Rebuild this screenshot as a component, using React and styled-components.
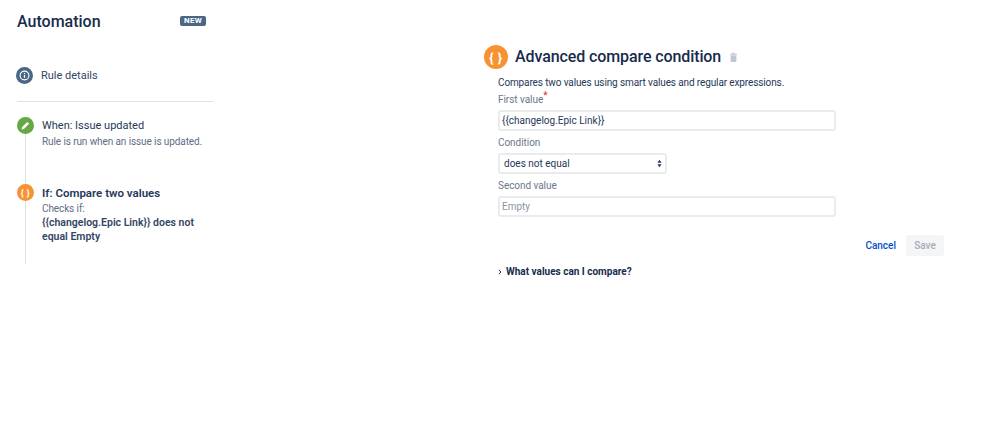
import styled, { createGlobalStyle } from 'styled-components'

const Global = createGlobalStyle`
  html, body { margin: 0; padding: 0; background: #fff; }
  body { font-family: Roboto, "Liberation Sans", sans-serif; color: #172b4d; }
`

const Page = styled.div`
  display: flex;
  width: 998px;
  height: 428px;
  overflow: hidden;
`

const Sidebar = styled.aside`
  width: 197px;
  margin-left: 16px;
  padding-top: 11px;
  flex-shrink: 0;
`

const Header = styled.div`
  display: flex;
  align-items: center;
  justify-content: space-between;
  height: 20px;
  padding-right: 7px;
`

const Title = styled.h1`
  margin: 0 0 0 1px;
  font-size: 16px;
  font-weight: 500;
  color: #172b4d;
`

const Badge = styled.span`
  background: #4a6785;
  color: #fff;
  border-radius: 2px;
  font-size: 8px;
  line-height: 10px;
  font-weight: 700;
  width: 26px;
  text-align: center;
  letter-spacing: 0.3px;
`

const DetailsRow = styled.div`
  display: flex;
  align-items: center;
  gap: 8px;
  margin-top: 34px;
  height: 20px;
`

const DetailsLabel = styled.span`
  font-size: 11px;
  color: #344563;
`

const Divider = styled.hr`
  border: 0;
  border-top: 1px solid #dfe1e6;
  margin: 16px 0 15px 1px;
`

const Step = styled.div`
  display: flex;
  gap: 8px;
  height: ${props => props.height}px;
  padding-left: 1px;
`

const Rail = styled.div`
  display: flex;
  flex-direction: column;
  align-items: center;
  width: 17px;
  flex-shrink: 0;
`

const Connector = styled.div`
  width: 1px;
  flex: 1;
  background: #dfe1e6;
`

const Round = styled.div`
  width: ${props => props.size}px;
  height: ${props => props.size}px;
  border-radius: 50%;
  background: ${props => props.color};
  color: #fff;
  display: flex;
  align-items: center;
  justify-content: center;
  flex-shrink: 0;
  font-size: ${props => props.font || 9}px;
  font-weight: 700;
  letter-spacing: 0.5px;
`

const StepBody = styled.div`
  padding-top: 1px;
`

const StepTitle = styled.div`
  font-size: ${props => (props.bold ? 11.5 : 11)}px;
  line-height: 16px;
  font-weight: ${props => (props.bold ? 600 : 400)};
  color: #253858;
`

const StepText = styled.div`
  font-size: 10px;
  letter-spacing: -0.1px;
  line-height: 14px;
  color: #5e6c84;
  margin-top: 1px;
  white-space: nowrap;
`

const Strong = styled.div`
  font-size: 10.5px;
  line-height: 14px;
  font-weight: 600;
  color: #344563;
  width: 165px;
`

const Main = styled.main`
  margin-left: 271px;
  padding-top: 45px;
  width: 460px;
`

const Heading = styled.div`
  display: flex;
  align-items: center;
  gap: 7px;
  height: 24px;
`

const HeadingText = styled.h2`
  margin: 0 0 2px;
  font-size: 16px;
  letter-spacing: -0.1px;
  font-weight: 500;
  color: #172b4d;
`

const TrashIcon = styled.svg`
  margin-left: 1px;
  width: 9px;
  height: 10px;
  fill: #c1c7d0;
`

const Form = styled.div`
  margin: 0 0 0 14px;
  padding-top: 7px;
`

const Intro = styled.p`
  margin: 0;
  font-size: 10px;
  letter-spacing: -0.12px;
  line-height: 14px;
  color: #253858;
`

const Label = styled.label`
  display: block;
  font-size: 10px;
  letter-spacing: -0.05px;
  line-height: 14px;
  color: #6b778c;
  margin-top: ${props => props.top || 5}px;
  margin-bottom: 3px;
`

const Req = styled.sup`
  color: #de350b;
  font-size: 10px;
  line-height: 0;
`

const Field = styled.div`
  box-sizing: border-box;
  height: 21px;
  width: ${props => props.width}px;
  border: 2px solid #e9ebee;
  border-radius: 3px;
  background: #fff;
  padding: 0 3px 0 ${props => props.pad || 2}px;
  display: flex;
  align-items: center;
  justify-content: space-between;
  font-size: 10px;
  color: ${props => (props.muted ? '#8993a4' : '#253858')};
`

const Arrows = styled.svg`
  width: 5px;
  height: 9px;
  fill: #253858;
`

const Actions = styled.div`
  display: flex;
  align-items: center;
  justify-content: flex-end;
  gap: 10px;
  width: 446px;
  margin-top: 18px;
`

const LinkButton = styled.span`
  font-size: 10px;
  font-weight: 500;
  color: #0052cc;
`

const SaveButton = styled.span`
  width: 38px;
  height: 21px;
  border-radius: 3px;
  background: #f4f5f7;
  color: #a5adba;
  font-size: 10px;
  font-weight: 500;
  display: flex;
  align-items: center;
  justify-content: center;
`

const Expand = styled.div`
  display: flex;
  align-items: center;
  gap: 4px;
  margin-top: 10px;
  font-size: 10px;
  font-weight: 700;
  color: #172b4d;
`

export default function App() {
  return (
    <Page>
      <Global />
      <Sidebar>
        <Header>
          <Title>Automation</Title>
          <Badge>NEW</Badge>
        </Header>
        <DetailsRow>
          <Round size={17} color="#4a6785">
            <svg width="11" height="11" viewBox="0 0 11 11" fill="none" stroke="#fff">
              <circle cx="5.5" cy="5.5" r="4.4" strokeWidth="1.1" />
              <path d="M5.5 5v2.8M5.5 3v.9" strokeWidth="1.2" />
            </svg>
          </Round>
          <DetailsLabel>Rule details</DetailsLabel>
        </DetailsRow>
        <Divider />
        <Step height={67}>
          <Rail>
            <Round size={17} color="#65a844">
              <svg width="9" height="9" viewBox="0 0 9 9" fill="#fff">
                <path d="M6.3.9l1.8 1.8-5.2 5.2L.6 8.4l.5-2.3z" />
              </svg>
            </Round>
            <Connector />
          </Rail>
          <StepBody>
            <StepTitle>When: Issue updated</StepTitle>
            <StepText>Rule is run when an issue is updated.</StepText>
          </StepBody>
        </Step>
        <Step height={80}>
          <Rail>
            <Round size={17} color="#f79232" font={9}>{'{ }'}</Round>
            <Connector />
          </Rail>
          <StepBody>
            <StepTitle bold>If: Compare two values</StepTitle>
            <StepText>Checks if:</StepText>
            <Strong>{'{{changelog.Epic Link}} does not equal Empty'}</Strong>
          </StepBody>
        </Step>
      </Sidebar>
      <Main>
        <Heading>
          <Round size={24} color="#f79232" font={13}>{'{ }'}</Round>
          <HeadingText>Advanced compare condition</HeadingText>
          <TrashIcon viewBox="0 0 10 11">
            <path d="M1 2h8v1H1zM3.5.8h3V2h-3zM1.8 3.6h6.4V10a1 1 0 0 1-1 1H2.8a1 1 0 0 1-1-1z" />
          </TrashIcon>
        </Heading>
        <Form>
          <Intro>Compares two values using smart values and regular expressions.</Intro>
          <Label top={3}>First value<Req>*</Req></Label>
          <Field width={338}>{'{{changelog.Epic Link}}'}</Field>
          <Label>Condition</Label>
          <Field width={169} pad={4}>
            does not equal
            <Arrows viewBox="0 0 6 10">
              <path d="M3 .5L5.5 4H.5zM3 9.5L.5 6h5z" />
            </Arrows>
          </Field>
          <Label>Second value</Label>
          <Field width={338} muted>Empty</Field>
          <Actions>
            <LinkButton>Cancel</LinkButton>
            <SaveButton>Save</SaveButton>
          </Actions>
          <Expand>
            <svg width="4" height="6" viewBox="0 0 4 6" fill="none" stroke="#172b4d" strokeWidth="1">
              <path d="M.8.8L3 3 .8 5.2" />
            </svg>
            What values can I compare?
          </Expand>
        </Form>
      </Main>
    </Page>
  )
}
